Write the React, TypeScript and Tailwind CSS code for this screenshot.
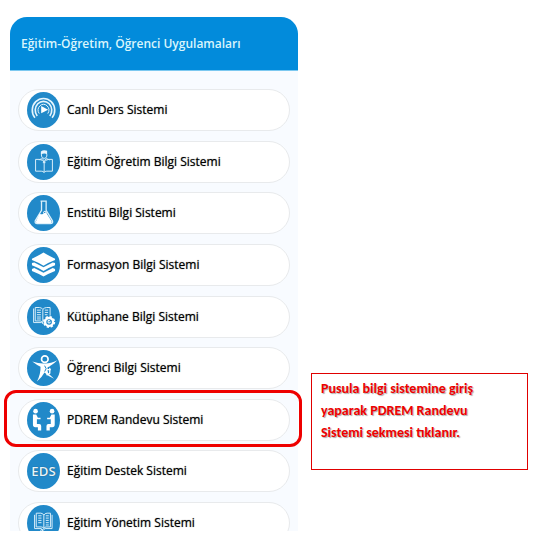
import type { ReactNode } from "react";

type App = {
  name: string;
  icon: ReactNode;
  highlighted?: boolean;
}

const apps: App[] = [
  {
    name: "Canlı Ders Sistemi",
    icon: (
      <g fill="none" stroke="#e6f5fd" strokeWidth="5">
        <path d="M-26 24A34 36 0 1 1 26 24" />
        <path d="M-19 18A25 27 0 1 1 19 18" />
        <path d="M-13 11A16 18 0 1 1 13 11" strokeWidth="3" />
        <path d="M-7 -12L14 -1L-7 10Z" fill="#fff" stroke="none" />
      </g>
    ),
  },
  {
    name: "Eğitim Öğretim Bilgi Sistemi",
    icon: (
      <g fill="none" stroke="#d9effa" strokeWidth="3">
        <path d="M-6 -24V-18Q-5 -11 2 -11Q9 -11 10 -18V-24" />
        <path d="M-8 -23V-32Q0 -38 11 -34V-24Q2 -29 -8 -23Z" fill="#e6f5fd" stroke="none" />
        <path d="M-14 -6Q-10 -9 -4 -10L2 -4L8 -10Q15 -9 18 -6" />
        <path d="M2 -4V32M-2 2H6" />
        <path d="M-24 -8H-13Q-1 -7 2 1Q5 -7 16 -8H27V28H10Q4 28 2 32Q-1 28 -7 28H-24Z" />
      </g>
    ),
  },
  {
    name: "Enstitü Bilgi Sistemi",
    icon: (
      <g>
        <path d="M-9 -36H10M-6 -35V-8L-25 24Q-27 32 -19 32H21Q30 32 27 24L8 -8V-35" fill="none" stroke="#d9effa" strokeWidth="4" />
        <path d="M-12 2Q-3 6 2 1Q8 -5 10 2L25 26Q26 31 20 31H-18Q-24 31 -23 26Z" fill="#fff" />
        <circle cx="4" cy="-1" r="4" fill="none" stroke="#fff" strokeWidth="3" />
      </g>
    ),
  },
  {
    name: "Formasyon Bilgi Sistemi",
    icon: (
      <g fill="#fff">
        <path d="M-35 -19Q-15 -29 0 -38Q15 -29 35 -19V-15Q15 -7 0 2Q-15 -7 -35 -15Z" />
        <path d="M-35 -6L-28 -8L0 7L28 -8L35 -6V1Q15 9 0 18Q-15 9 -35 1Z" />
        <path d="M-35 12L-28 9L0 24L28 9L35 12V18Q15 26 0 35Q-15 26 -35 18Z" />
      </g>
    ),
  },
  {
    name: "Kütüphane Bilgi Sistemi",
    icon: (
      <g fill="none" stroke="#d9effa" strokeWidth="3">
        <path d="M-30 -26V17H-6Q-3 18 -2 21M-25 -29H-12Q-4 -28 -2 -23Q1 -28 9 -29H20V-4M-25 -29V12H-10Q-4 13 -2 18V-23" />
        <path d="M-20 -21H-8M-20 -14H-8M-20 -7H-8M-20 0H-8M-20 6H-8M4 -21H14M4 -14H14M4 -7H12" />
        <circle cx="17" cy="15" r="12" fill="#2189c9" stroke="#fff" strokeWidth="7" />
        <circle cx="17" cy="15" r="16" stroke="#fff" strokeWidth="5" strokeDasharray="7 5.5" />
        <path d="M14 18V11Q17 9 20 12M14 18H20V14" stroke="#fff" />
      </g>
    ),
  },
  {
    name: "Öğrenci Bilgi Sistemi",
    icon: (
      <g fill="none" stroke="#fff" strokeLinecap="round">
        <circle cx="4" cy="-27" r="10" strokeWidth="5" />
        <path d="M-34 -20Q-13 -13 3 -14Q20 -13 42 -24Q24 -6 12 -4Q8 6 14 16L32 33Q17 28 3 14Q-4 28 -20 41Q-8 18 -9 -4Q-20 -9 -34 -20Z" fill="#fff" stroke="none" />
        <path d="M9 -3L18 -7M10 -3V18M10 5H21M19 1V16L11 21" strokeWidth="4" />
        <path d="M4 -6L8 2L4 10" stroke="#2189c9" strokeWidth="3" />
      </g>
    ),
  },
  {
    name: "PDREM Randevu Sistemi",
    highlighted: true,
    icon: (
      <g fill="#fff">
        <circle cx="-24" cy="-27" r="7" />
        <path d="M-32 -17H-22L-17 -7H-9V-2H-20V12H-13Q-7 12 -7 18V32H-17V22H-25Q-32 22 -32 14Z" />
        <circle cx="26" cy="-27" r="7" />
        <path d="M34 -17H24L19 -7H11V-2H22V12H15Q9 12 9 18V32H19V22H27Q34 22 34 14Z" />
      </g>
    ),
  },
  {
    name: "Eğitim Destek Sistemi",
    icon: (
      <text x="0" y="14" textAnchor="middle" fill="#e6f5fd" className="font-['Open_Sans',sans-serif] text-[40px] font-semibold">EDS</text>
    ),
  },
  {
    name: "Eğitim Yönetim Sistemi",
    icon: (
      <g fill="none" stroke="#d9effa" strokeWidth="3">
        <path d="M-22 -30H-8Q-1 -29 1 -24Q4 -30 11 -30H21V12H8Q2 12 1 17Q-1 12 -7 12H-22ZM1 -24V17" />
        <path d="M-27 -25V17H-7L-1 22L5 17H26V-25" />
        <path d="M-16 -22H-6M-16 -15H-6M-16 -8H-6M-16 -1H-6M7 -22H16M7 -15H16M7 -8H16M7 -1H16M7 6H16" />
        <path d="M-10 28L-6 19L0 27" />
      </g>
    ),
  },
];

function AppLink({ app }: { app: App }) {
  return (
    <li className="relative">
      <a href="#" className="flex h-[42px] items-center gap-[7px] rounded-full border border-[#e8eaec] bg-white pl-2 text-xs font-medium text-black [text-shadow:0_0_1px_#0009]">
        <svg viewBox="-50 -55 100 110" className="h-9 w-[33px] shrink-0" preserveAspectRatio="none" aria-hidden="true">
          <ellipse rx="50" ry="55" fill="#2189c9" />
          {app.icon}
        </svg>
        <span>{app.name}</span>
      </a>
      {app.highlighted && (
        <div className="pointer-events-none absolute -top-[9px] -right-3 -bottom-[6px] -left-[14px] rounded-xl border-3 border-[#ee0000]" />
      )}
    </li>
  );
}

export default function App() {
  return (
    <main className="flex items-start gap-[13px] bg-white pt-[17px] pr-[9px] pb-6 pl-[10px] font-['Open_Sans','Noto_Sans',sans-serif]">
      <section className="h-[514px] w-72 shrink-0 overflow-y-clip rounded-t-[17px] bg-[#f8fbff]">
        <h1 className="flex h-[54px] items-center rounded-t-[17px] border-b border-[#7cc8f0] bg-[#028bdb] px-[11px] text-xs font-semibold text-[#d9f5fc]">
          Eğitim-Öğretim, Öğrenci Uygulamaları
        </h1>
        <ul className="mx-2 mt-[18px] flex h-[455px] flex-col justify-between">
          {apps.map((app) => <AppLink key={app.name} app={app} />)}
        </ul>
      </section>
      <aside className="mt-[356px] min-h-[97px] flex-1 border border-[#e00000] py-1 pr-5 pl-[9px]">
        <p className="font-['Carlito','Lato',sans-serif] text-sm leading-[22px] font-bold text-[#ee0000] [text-shadow:1px_1px_1px_#0005]">
          Pusula bilgi sistemine giriş yaparak PDREM Randevu Sistemi sekmesi tıklanır.
        </p>
      </aside>
    </main>
  );
}
